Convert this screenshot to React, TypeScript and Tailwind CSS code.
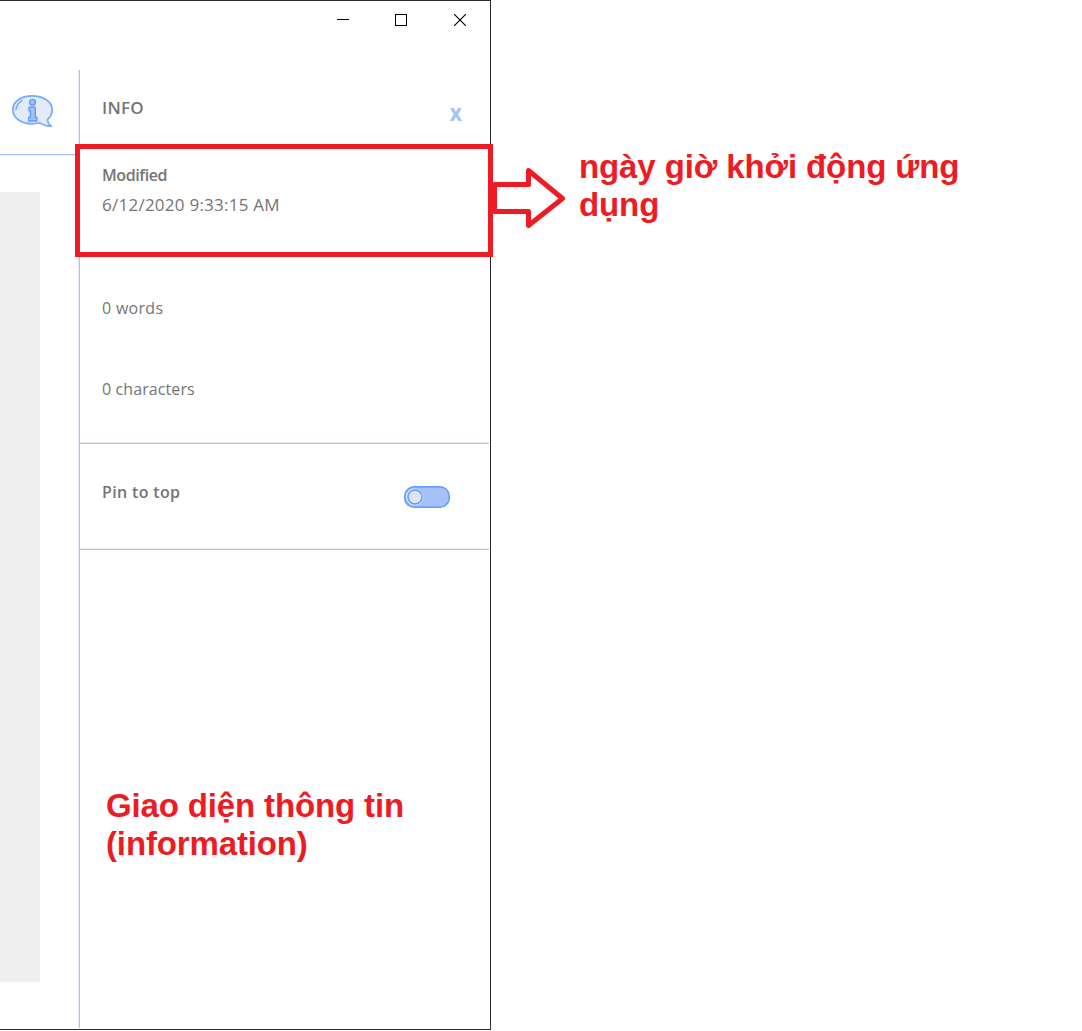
import React from "react";

function InfoBubble() {
  return (
    <svg width="44" height="36" viewBox="0 0 44 36" fill="none" className="block">
      <path
        d="M21 2.8C10 2.8 1.8 8.8 1.8 16.8S10 30.8 21 30.8c3 0 5.200-.3 7.600-1.100C31 31.600 35 33.300 40.300 33.200c-2.600-2-3.900-4.400-3.700-6.800 3.100-2.600 4.600-6 4.600-9.600C41.200 8.800 32.500 2.800 21 2.800Z"
        fill="#e4eafa"
        stroke="#75abff"
        strokeWidth="1.700"
        strokeLinejoin="round"
      />
      <path d="M5 16.500c.4-4 2.500-6.700 6-8.800" stroke="#75abff" strokeWidth="1.500" strokeLinecap="round" />
      <circle cx="21.500" cy="9.300" r="2.900" fill="#a5c1f8" stroke="#5c9cff" strokeWidth="1.400" />
      <path
        d="M18 14.200h6.300v10h1.600v3.800h-8.200v-3.800h1.700v-6.300h-1.400Z"
        fill="#a5c1f8"
        stroke="#5c9cff"
        strokeWidth="1.400"
        strokeLinejoin="round"
      />
    </svg>
  );
}

function WindowButtons() {
  return (
    <div className="flex h-[69px] justify-end pr-[24px] pt-[13px]">
      <svg width="12" height="12" shapeRendering="crispEdges">
        <rect y="5" width="12" height="1" fill="#000" />
      </svg>
      <svg width="12" height="12" shapeRendering="crispEdges" className="ml-[46px] mr-[47px]">
        <rect x=".5" y=".5" width="11" height="11" fill="none" stroke="#000" />
      </svg>
      <svg width="12" height="12">
        <path d="M0 0 12 12M12 0 0 12" stroke="#000" strokeWidth="1.100" />
      </svg>
    </div>
  );
}

function Toggle() {
  return (
    <svg width="48" height="24" viewBox="0 0 48 24" className="block">
      <rect x="1.700" y="1.700" width="44.600" height="20.600" rx="9.500" fill="#a5c1f8" stroke="#5c9cff" strokeWidth="1.500" />
      <circle cx="11.700" cy="12" r="8.600" fill="#dfe9fc" />
      <circle cx="12" cy="12" r="7" fill="#e1e4f0" stroke="#5c9cff" strokeWidth="1.500" />
    </svg>
  );
}

function InfoPanel() {
  return (
    <section className="w-[411px] border-l border-[#a5c1f8] font-['Open_Sans',sans-serif] text-[16px] leading-[24px] text-[#757575] shadow-[-1px_0_0_#e6eefe]">
      <header className="flex h-[74px] justify-between pl-[22px] pr-[28px] pt-[26px]">
        <h1 className="text-[17px] font-semibold tracking-[0.2px]">INFO</h1>
        <button className="mt-[3px] h-[26px] origin-right scale-y-110 text-[21px] font-bold leading-[26px] text-[#a5c1f8]">
          x
        </button>
      </header>
      <div className="-ml-[5px] h-[113px] w-[418px] border-[5px] border-[#ed1c24] bg-white pl-[22px] pt-[14px]">
        <h2 className="font-semibold tracking-[-0.4px]">Modified</h2>
        <p className="mt-[6px] whitespace-nowrap text-[17px] tracking-[0.25px]">6/12/2020 9:33:15 AM</p>
      </div>
      <div className="mr-px h-[187px] border-b border-[#a5c1f8] pl-[22px] pt-[39px] shadow-[inset_0_-1px_0_#e6eefe]">
        <p className="tracking-[0.3px]">0 words</p>
        <p className="mt-[57px] tracking-[0.1px]">0 characters</p>
      </div>
      <div className="mr-px flex h-[106px] justify-between border-b border-[#a5c1f8] pl-[22px] pr-[38px] pt-[36px] shadow-[inset_0_-1px_0_#e6eefe]">
        <h2 className="font-semibold tracking-[0.35px]">Pin to top</h2>
        <div className="pt-[5px]">
          <Toggle />
        </div>
      </div>
      <p className="ml-[26px] mt-[237px] whitespace-nowrap font-['Liberation_Sans',sans-serif] text-[33px] font-bold leading-[38px] tracking-[-0.14px] text-[#ed1c24]">
        Giao diện thông tin
        <br />
        (information)
      </p>
    </section>
  );
}

export default function App() {
  return (
    <div className="flex h-[1031px] w-[1082px] overflow-hidden bg-white">
      <main className="h-[1030px] w-[491px] shrink-0 border-b border-r border-t border-[#2d2b2a]">
        <WindowButtons />
        <div className="flex h-[958px]">
          <aside className="w-[79px] shrink-0">
            <div className="h-[85px] border-b border-[#a5c1f8] pl-[11px] pt-[23px] shadow-[0_1px_0_#e6eefe]">
              <InfoBubble />
            </div>
            <div className="mt-[37px] h-[790px] w-[40px] bg-[#efefef]" />
          </aside>
          <InfoPanel />
        </div>
      </main>
      <div className="flex pt-[148px]">
        <svg width="76" height="66" viewBox="0 0 76 66" className="mt-[16px] shrink-0">
          <path
            d="M3.500 20.500H37.500V6.500L71.500 34.500L37.500 61.500V47.500H3.500Z"
            fill="none"
            stroke="#ed1c24"
            strokeWidth="5"
            strokeLinejoin="round"
          />
        </svg>
        <p className="ml-[12px] w-[400px] font-['Liberation_Sans',sans-serif] text-[33px] font-bold leading-[38px] tracking-[-0.1px] text-[#ed1c24]">
          ngày giờ khởi động ứng
          <br />
          dụng
        </p>
      </div>
    </div>
  );
}
